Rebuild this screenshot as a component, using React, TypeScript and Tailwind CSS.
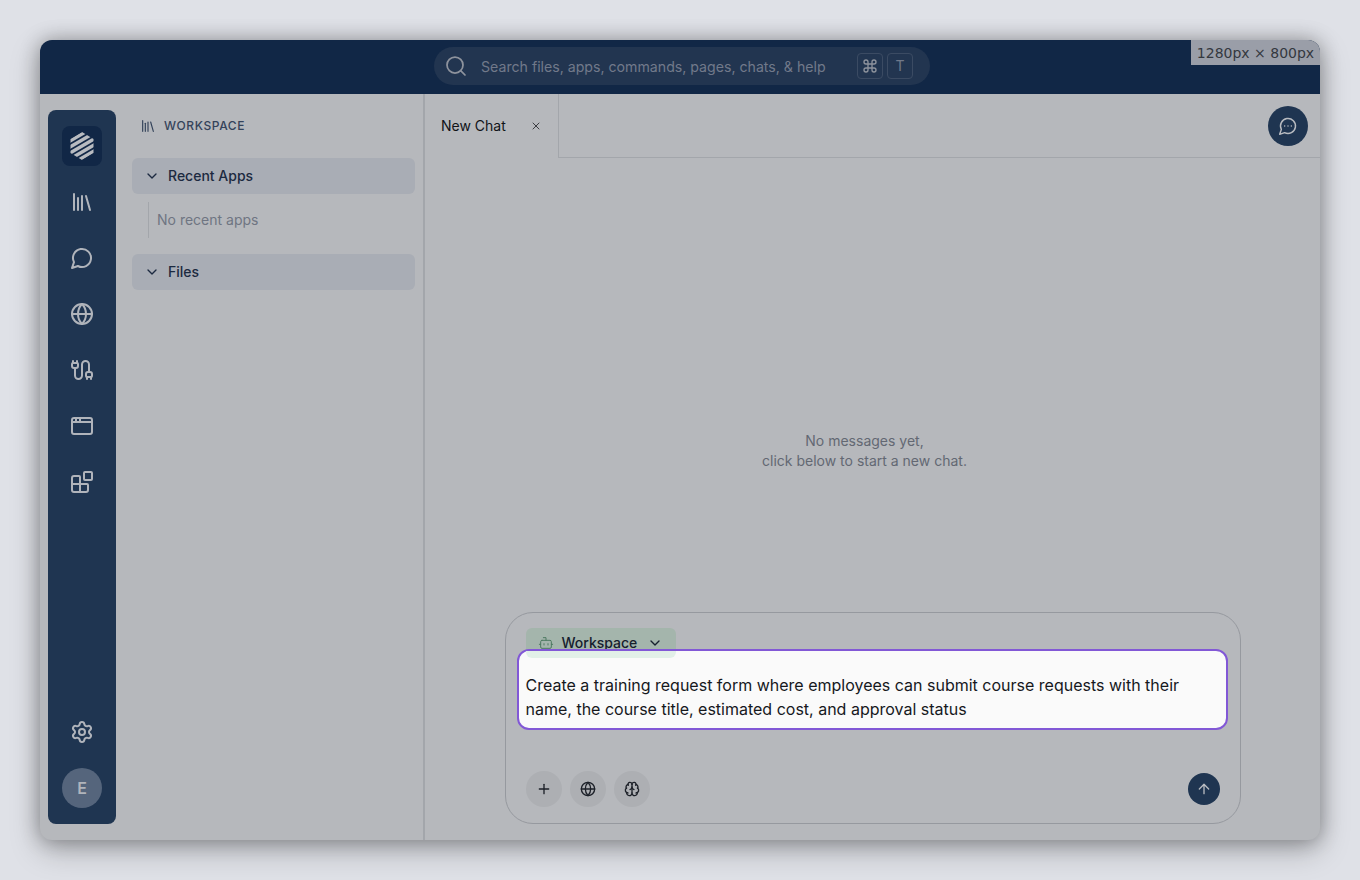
import {
  AppWindow,
  ArrowUp,
  Blocks,
  Bot,
  Brain,
  Cable,
  ChevronDown,
  Command,
  Globe,
  Library,
  Plus,
  Search,
  Settings,
  X,
} from "lucide-react";

const Bubble = ({ size, strokeWidth, dots }: { size: number; strokeWidth: number; dots?: boolean }) => (
  <svg width={size} height={size} viewBox="0 0 24 24" fill="none" stroke="currentColor" strokeWidth={strokeWidth} strokeLinecap="round" strokeLinejoin="round">
    <path d="M7.9 20A9 9 0 1 0 4 16.1L2 22Z" />
    {dots && <path d="M8 12h.01M12 12h.01M16 12h.01" />}
  </svg>
);

const ChatIcon = () => <Bubble size={24} strokeWidth={2} />;
const railItems = [Library, ChatIcon, Globe, Cable, AppWindow, Blocks];

const Logo = () => (
  <svg width="26" height="30" viewBox="0 0 26 30" fill="none">
    <defs>
      <clipPath id="hex">
        <polygon points="13,1 24.5,8 24.5,22 13,29 1.5,22 1.5,8" />
      </clipPath>
    </defs>
    <g clipPath="url(#hex)" stroke="#b8bbc0" strokeWidth="3.4">
      <path d="M-4 12.9 L30 -6.9" />
      <path d="M-4 18.9 L30 -0.9" />
      <path d="M-4 24.9 L30 5.1" />
      <path d="M-4 30.9 L30 11.1" />
      <path d="M-4 36.9 L30 17.1" />
    </g>
  </svg>
);

const Section = ({ title }: { title: string }) => (
  <div className="flex h-9 items-center gap-2 rounded-md bg-[#a9adb5] pl-3 text-sm font-medium text-[#1c2a40]">
    <ChevronDown size={16} strokeWidth={2} />
    <span>{title}</span>
  </div>
);

export default function App() {
  return (
    <div className="flex h-[880px] w-[1360px] items-center justify-center overflow-hidden bg-[#dfe1e7] font-['Inter',sans-serif]">
      <div className="flex h-[800px] w-[1280px] flex-col overflow-hidden rounded-xl bg-[#b6b8bc] shadow-[0_0_20px_rgba(0,0,0,0.3),0_10px_30px_rgba(0,0,0,0.25)]">
        {/* top bar */}
        <header className="relative flex h-[54px] shrink-0 justify-center bg-[#112746] pt-[7px]">
          <div className="ml-[4px] flex h-[38px] w-[496px] items-center rounded-full bg-[#223550] pl-[10px] pr-[17px] text-[#71798a]">
            <Search size={24} strokeWidth={1.75} className="text-[#8e939d]" />
            <span className="ml-[13px] flex-1 pt-[1px] text-[14.15px]">Search files, apps, commands, pages, chats, &amp; help</span>
            <span className="flex h-[26px] w-[26px] items-center justify-center rounded border border-[#3b4b63] text-[#8e939d]">
              <Command size={16} strokeWidth={2} />
            </span>
            <span className="ml-1 flex h-[26px] w-[26px] items-center justify-center rounded border border-[#3b4b63] text-sm text-[#71798a]">T</span>
          </div>
          <div className="absolute right-0 top-0 flex h-[25px] w-[129px] items-center justify-center bg-[#9a9ea8] font-['DejaVu_Sans',sans-serif] text-sm text-[#34383f]">
            1280px × 800px
          </div>
        </header>

        <div className="flex min-h-0 flex-1">
          {/* icon rail */}
          <div className="shrink-0 py-4 pl-2">
            <nav className="flex h-full w-[68px] flex-col items-center rounded-lg bg-[#1f3551] py-4 text-[#b0b4bb]">
              <div className="flex h-10 w-10 items-center justify-center rounded-lg bg-[#112746]">
                <Logo />
              </div>
              <div className="mt-4 flex flex-col gap-4">
                {railItems.map((Icon, i) => (
                  <div key={i} className="flex h-10 w-10 items-center justify-center">
                    <Icon size={24} strokeWidth={2} />
                  </div>
                ))}
              </div>
              <div className="mt-auto flex h-10 w-10 items-center justify-center">
                <Settings size={24} strokeWidth={2} />
              </div>
              <div className="mt-4 flex h-10 w-10 items-center justify-center rounded-full bg-[#55657c] text-base font-semibold">E</div>
            </nav>
          </div>

          {/* workspace panel */}
          <aside className="w-[309px] shrink-0 border-r-2 border-[#a3a6ab] pl-4 pr-2 pt-4">
            <div className="flex h-8 items-center gap-2 pl-2 text-xs font-medium tracking-wider text-[#34435a]">
              <Library size={16} strokeWidth={1.75} />
              <span>WORKSPACE</span>
            </div>
            <div className="mt-4">
              <Section title="Recent Apps" />
              <div className="ml-4 mt-2 flex h-9 items-center border-l border-[#a3a6ab] pl-2 text-sm text-[#6f7582]">No recent apps</div>
              <div className="mt-4">
                <Section title="Files" />
              </div>
            </div>
          </aside>

          {/* chat */}
          <main className="flex min-w-0 flex-1 flex-col">
            <div className="flex h-16 shrink-0">
              <div className="flex w-[134px] items-center justify-between border-r border-[#a3a6ab] pl-4 pr-4 text-sm text-[#111318]">
                <span>New Chat</span>
                <X size={12} strokeWidth={1.5} />
              </div>
              <div className="flex flex-1 items-center justify-end border-b border-[#a3a6ab] pt-[1px] pr-3">
                <div className="flex h-10 w-10 items-center justify-center rounded-full bg-[#1f3551] text-[#b8bbc0]">
                  <Bubble size={20} strokeWidth={1.75} dots />
                </div>
              </div>
            </div>
            <div className="flex flex-1 items-center justify-center pt-[132px] pr-4 text-center text-sm leading-5 text-[#636873]">
              <p>
                No messages yet,
                <br />
                click below to start a new chat.
              </p>
            </div>
            <div className="mx-auto mb-4 flex h-[212px] w-[736px] shrink-0 flex-col rounded-[28px] border border-[#96999f] pl-[11px] pr-[12px] pt-[15px]">
              <div className="ml-[9px] flex h-[30px] w-[150px] items-center rounded-md bg-[#a4b5ac] pl-3 text-sm font-medium text-[#16202e]">
                <Bot size={16} strokeWidth={1.5} className="text-[#4e7a62]" />
                <span className="ml-2">Workspace</span>
                <ChevronDown size={16} strokeWidth={2} className="ml-[10px]" />
              </div>
              <div className="relative -mt-[9px] flex h-[81px] items-center rounded-xl border-2 border-[#8258d6] bg-[#fafafa] pl-[7px] pr-4 pt-[14px] text-base leading-6 text-[#16181d]">
                <div className="absolute left-[7px] top-0 h-[7px] w-[150px] rounded-b-md bg-[#e2f0e8]" />
                Create a training request form where employees can submit course requests with their name, the course title, estimated cost, and approval status
              </div>
              <div className="mt-auto mb-4 flex items-center gap-2 pl-[9px] pr-[8px] text-[#1c2028]">
                <div className="flex h-9 w-9 items-center justify-center rounded-full bg-[#adafb3]">
                  <Plus size={16} strokeWidth={2} />
                </div>
                <div className="flex h-9 w-9 items-center justify-center rounded-full bg-[#adafb3]">
                  <Globe size={16} strokeWidth={2} />
                </div>
                <div className="flex h-9 w-9 items-center justify-center rounded-full bg-[#adafb3]">
                  <Brain size={16} strokeWidth={2} />
                </div>
                <div className="ml-auto flex h-8 w-8 items-center justify-center rounded-full bg-[#1f3551] text-[#b8bbc0]">
                  <ArrowUp size={16} strokeWidth={2} />
                </div>
              </div>
            </div>
          </main>
        </div>
      </div>
    </div>
  );
}
